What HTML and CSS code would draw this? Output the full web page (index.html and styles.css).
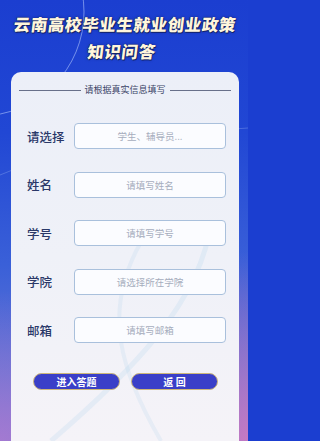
FILE: index.html
```html
<!DOCTYPE html>
<html lang="zh-CN">
<head>
<meta charset="utf-8">
<title>云南高校毕业生就业创业政策知识问答</title>
<link rel="stylesheet" href="styles.css">
</head>
<body>
<div class="page">
  <svg class="bg-arc" width="248" height="441" viewBox="0 0 248 441">
    <circle cx="-20" cy="12" r="104" fill="none" stroke="rgba(190,210,255,0.55)" stroke-width="1"/>
    <path d="M0 175 C60 150 140 135 248 128" fill="none" stroke="rgba(200,220,255,0.25)" stroke-width="1"/>
  </svg>
  <h1 class="title"><span>云南高校毕业生就业创业政策</span><span>知识问答</span></h1>
  <main class="card">
    <svg class="card-deco" width="228" height="369" viewBox="0 0 228 369">
      <path d="M40 369 C120 300 190 230 200 150" fill="none" stroke="rgba(175,210,235,0.22)" stroke-width="5"/>
      <path d="M150 369 C110 300 90 240 130 170" fill="none" stroke="rgba(175,210,235,0.2)" stroke-width="4"/>
    </svg>
    <div class="divider"><span class="line"></span><span class="divider-text">请根据真实信息填写</span><span class="line"></span></div>
    <div class="rows">
      <div class="row"><span class="label">请选择</span><div class="field">学生、辅导员...</div></div>
      <div class="row"><span class="label">姓名</span><div class="field">请填写姓名</div></div>
      <div class="row"><span class="label">学号</span><div class="field">请填写学号</div></div>
      <div class="row"><span class="label">学院</span><div class="field">请选择所在学院</div></div>
      <div class="row"><span class="label">邮箱</span><div class="field">请填写邮箱</div></div>
    </div>
    <div class="actions">
      <button class="btn">进入答题</button>
      <button class="btn">返 回</button>
    </div>
  </main>
</div>
</body>
</html>
```

FILE: styles.css
```css
* { box-sizing: border-box; }
html, body { margin: 0; padding: 0; }
html { background: #1b3ed0; }
body {
  width: 248px;
  height: 441px;
  overflow: hidden;
  font-family: "Noto Sans CJK SC", "Noto Sans", sans-serif;
}
.page {
  position: relative;
  width: 248px;
  height: 441px;
  display: flex;
  flex-direction: column;
  background:
    radial-gradient(ellipse 110px 150px at 0% 100%, rgba(180,120,210,0.6), rgba(180,120,210,0) 100%),
    radial-gradient(ellipse 80px 190px at 100% 100%, rgba(215,120,190,0.75), rgba(215,120,190,0) 100%),
    linear-gradient(180deg, #1b3ed0 0%, #2147d4 30%, #3a60d8 60%, #6474d4 85%, #8a7cd0 100%);
}
.bg-arc {
  position: absolute;
  left: 0;
  top: 0;
}
.title {
  position: relative;
  margin: 0;
  padding-top: 11px;
  display: flex;
  flex-direction: column;
  align-items: center;
  font-size: 16.5px;
  font-weight: 900;
  line-height: 27px;
  letter-spacing: 0.6px;
  color: #fff6dc;
  transform: skewX(-7deg);
  text-shadow: 1px 1px 0 #132266, -0.5px 0 0 #132266, 0 -0.5px 0 #132266, 0 0 3px rgba(10,20,80,0.6);
}
.card {
  position: relative;
  margin: 7px 9px 0 11px;
  flex: 1;
  border-radius: 10px 10px 0 0;
  background: linear-gradient(180deg, #eceff8 0%, #eff1f8 50%, #f5f3f8 100%);
  padding: 13px 13px 0 16px;
  overflow: hidden;
}
.card-deco {
  position: absolute;
  left: 0;
  top: 0;
}
.divider {
  position: relative;
  display: flex;
  align-items: center;
  margin: 0 -5px 0 -8px;
  height: 10px;
}
.line {
  flex: 1;
  height: 1px;
  background: #68708a;
}
.divider-text {
  font-size: 9px;
  line-height: 10px;
  color: #3a4366;
  padding: 0 4px;
}
.rows {
  position: relative;
  margin-top: 28px;
  display: flex;
  flex-direction: column;
  gap: 22.5px;
}
.row {
  display: flex;
  align-items: center;
  height: 26px;
}
.label {
  width: 47px;
  font-size: 12.5px;
  font-weight: 500;
  color: #2a3868;
}
.field {
  width: 152px;
  height: 26px;
  border: 1px solid #a9c0dc;
  border-radius: 4px;
  background: #fbfcff;
  display: flex;
  align-items: center;
  justify-content: center;
  font-size: 9.5px;
  color: #a6adbd;
}
.actions {
  position: relative;
  margin: 30px 0 0 6px;
  display: flex;
  gap: 11px;
}
.btn {
  width: 87px;
  height: 17px;
  padding: 0;
  border: 1px solid #cdb77a;
  border-radius: 9px;
  background: #3a3fc8;
  color: #ffffff;
  font-family: "Noto Sans CJK SC", sans-serif;
  font-size: 10px;
  font-weight: 700;
  line-height: 15px;
}
```
